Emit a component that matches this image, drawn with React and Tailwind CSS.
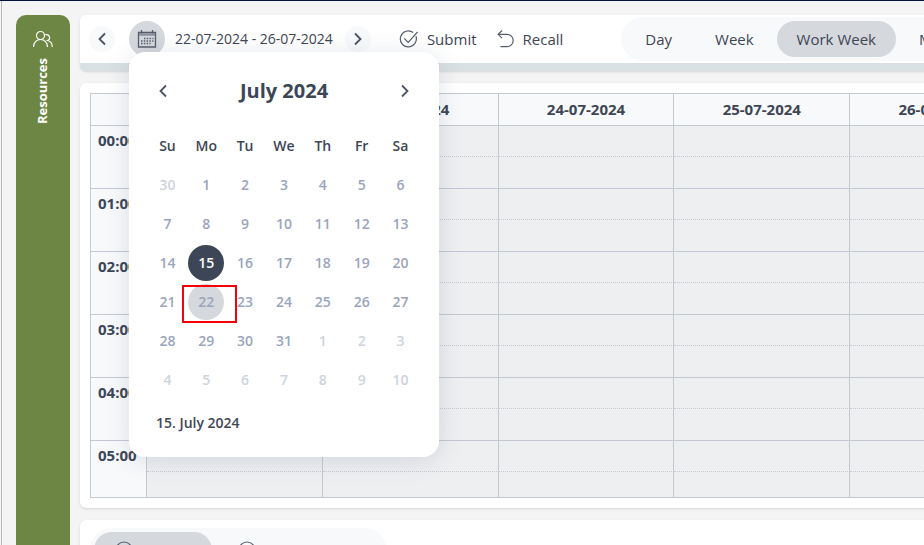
import React from "react";

const days = ["22-07-2024", "23-07-2024", "24-07-2024", "25-07-2024", "26-07-2024"];
const hours = ["00:00", "01:00", "02:00", "03:00", "04:00", "05:00"];
const views = ["Day", "Week", "Work Week", "Month"];
const weekdays = ["Su", "Mo", "Tu", "We", "Th", "Fr", "Sa"];

// June 30 is the first visible day, August 10 the last one
const calendarDays = Array.from({ length: 42 }, (_, i) => {
  const date = new Date(2024, 5, 30 + i);
  return { day: date.getDate(), inMonth: date.getMonth() === 6 };
});

const Chevron = ({ left }) => (
  <svg width="10" height="14" viewBox="0 0 10 14" fill="none" stroke="#4b5363" strokeWidth="1.8">
    <path d={left ? "M8 1.5 2.5 7 8 12.5" : "M2 1.5 7.500 7 2 12.5"} />
  </svg>
);

const CalendarIcon = () => (
  <svg width="20" height="20" viewBox="0 0 20 20" fill="none" stroke="#565e6d">
    <path d="M1.500 3.500h17v14.500h-17z" strokeWidth="1.300" />
    <path d="M2 5.500h16" stroke="#8b919d" strokeWidth="2.500" />
    <path d="M4.500 1v3.500M15.500 1v3.500" strokeWidth="1.300" />
    <path d="M7 9.500h9.500M4 12h12.500M4 14.500h9.500" strokeWidth="1.500" strokeDasharray="1.500 1.300" />
  </svg>
);

const SubmitIcon = () => (
  <svg width="20" height="20" viewBox="0 0 20 20" fill="none" stroke="#565e6d" strokeWidth="1.200">
    <path d="M16.900 7.200A8 8 0 1 1 14.200 3.500" />
    <path d="M5.200 9.300 9.200 13.300 18.500 3" />
  </svg>
);

const RecallIcon = () => (
  <svg width="18" height="20" viewBox="0 0 18 20" fill="none" stroke="#565e6d" strokeWidth="1.200">
    <path d="M5 1.500 1.200 5.300 5 9.100" />
    <path d="M1.200 5.300H10a6.200 6.200 0 0 1 0 12.400H3.500" />
  </svg>
);

const PeopleIcon = () => (
  <svg width="22" height="18" viewBox="0 0 22 18" fill="none" stroke="#fff" strokeWidth="1.200">
    <circle cx="8.500" cy="5.500" r="4" />
    <path d="M1.500 17c0-4.500 3-7.500 7-7.500s7 3 7 7.500" />
    <path d="M13.200 4.800c4-1.300 6.300 3.700 2.300 5.700 3.200.7 4.800 3.200 4.800 6.500" />
  </svg>
);

const TabIcon = () => (
  <svg width="18" height="18" viewBox="0 0 18 18" fill="none" stroke="#565e6d" strokeWidth="1.200">
    <circle cx="9" cy="9" r="8" />
    <path d="M9 4v5h4" />
  </svg>
);

const DatePicker = () => (
  <div className="absolute left-0 top-[31px] z-10 w-[310px] rounded-2xl bg-white px-[19px] pb-6 pt-5 shadow-[0_3px_24px_rgba(60,80,110,0.16)]">
    <div className="flex items-center justify-between px-2.5">
      <button type="button" aria-label="Previous month" className="py-3">
        <Chevron left />
      </button>
      <h2 className="text-xl leading-7 font-bold">July 2024</h2>
      <button type="button" aria-label="Next month" className="py-3">
        <Chevron />
      </button>
    </div>
    <table className="mt-4 w-full table-fixed text-center text-sm">
      <thead>
        <tr className="h-[39px]">
          {weekdays.map((name) => (
            <th key={name} className="p-0 font-semibold">
              {name}
            </th>
          ))}
        </tr>
      </thead>
      <tbody>
        {[0, 1, 2, 3, 4, 5].map((week) => (
          <tr key={week}>
            {calendarDays.slice(week * 7, week * 7 + 7).map(({ day, inMonth }) => {
              let style = inMonth ? "text-[#9aa5bd]" : "text-[#ced3df]";
              if (inMonth && day === 15) style = "bg-[#3d4656] text-white";
              if (inMonth && day === 22) style = "bg-[#d5d8dd] text-[#9aa5bd]";
              return (
                <td key={day} className="relative h-[39px] p-0">
                  <button type="button" className={`size-9 rounded-full font-semibold ${style}`}>
                    {day}
                  </button>
                  {inMonth && day === 22 && (
                    <span className="pointer-events-none absolute -left-[5px] top-[3px] h-[38px] w-[55px] border-2 border-[#f80008]" />
                  )}
                </td>
              );
            })}
          </tr>
        ))}
      </tbody>
    </table>
    <p className="mt-3.5 px-2 text-sm font-semibold">15. July 2024</p>
  </div>
);

const Toolbar = () => (
  <div className="relative z-10 rounded-md border-b-8 border-[#d9e0e3] bg-white shadow-sm">
    <div className="flex h-12 items-center whitespace-nowrap pl-[9px]">
      <button
        type="button"
        aria-label="Previous week"
        className="flex size-[26px] shrink-0 items-center justify-center rounded-full bg-[#f8f9fb]"
      >
        <Chevron left />
      </button>
      <div className="relative ml-3.5 shrink-0">
        <button
          type="button"
          aria-label="Pick a date"
          className="flex size-9 items-center justify-center rounded-full bg-[#d5d8dd]"
        >
          <CalendarIcon />
        </button>
        <DatePicker />
      </div>
      <span className="ml-2.5 text-sm">22-07-2024 - 26-07-2024</span>
      <button
        type="button"
        aria-label="Next week"
        className="ml-3 flex size-[26px] shrink-0 items-center justify-center rounded-full bg-[#f8f9fb]"
      >
        <Chevron />
      </button>
      <button type="button" className="ml-7 flex items-center gap-2 text-[15px]">
        <SubmitIcon />
        Submit
      </button>
      <button type="button" className="ml-5 flex items-center gap-2 text-[15px]">
        <RecallIcon />
        Recall
      </button>
      <div className="ml-[58px] flex h-11 shrink-0 items-center gap-[3px] rounded-full bg-[#f8f9fb] px-1">
        {views.map((view) => (
          <button
            key={view}
            type="button"
            className={`h-9 rounded-full px-5 text-[15px] ${view === "Work Week" ? "bg-[#d5d8dd]" : ""}`}
          >
            {view}
          </button>
        ))}
      </div>
    </div>
  </div>
);

const Schedule = () => (
  <div className="mt-3 overflow-hidden rounded-md bg-white p-2.5 shadow">
    <table className="w-full min-w-[936px] table-fixed border-separate border-spacing-0 border-l border-t border-[#c4c8d1] text-[15px]">
      <thead>
        <tr className="h-8 bg-[#f8f9fb]">
          <th className="w-14 border-b border-r border-[#c4c8d1] p-0" />
          {days.map((day) => (
            <th key={day} className="border-b border-r border-[#c4c8d1] p-0 font-bold">
              {day}
            </th>
          ))}
        </tr>
      </thead>
      <tbody>
        {hours.map((hour, i) => (
          <React.Fragment key={hour}>
            <tr className="h-[31px]">
              <th
                rowSpan={2}
                className="border-b border-r border-[#c4c8d1] bg-[#f8f9fb] p-0 pl-[7px] pt-[3px] text-left align-top font-bold"
              >
                {hour}
              </th>
              {days.map((day) => (
                <td
                  key={day}
                  className="border-b border-r border-[#c4c8d1] bg-[#eeeff1] p-0 [border-bottom-style:dotted]"
                />
              ))}
            </tr>
            <tr className={i === hours.length - 1 ? "h-[26px]" : "h-8"}>
              {days.map((day) => (
                <td key={day} className="border-b border-r border-[#c4c8d1] bg-[#eeeff1] p-0" />
              ))}
            </tr>
          </React.Fragment>
        ))}
      </tbody>
    </table>
  </div>
);

const App = () => {
  return (
    <div className="h-screen overflow-hidden border-t border-[#04103a] bg-[#f4f4f4] pl-px font-['Open_Sans','Noto_Sans',sans-serif] text-[#3d4656]">
      <div className="-mr-3 flex min-h-full gap-2.5 border-l border-[#b9bbc0] pl-3.5 pt-3.5">
        <aside className="flex w-[54px] shrink-0 flex-col items-center rounded-t-[10px] bg-[#6e8644] pt-[15px] text-white">
          <PeopleIcon />
          <span className="mt-2.5 rotate-180 text-[13px] font-bold [writing-mode:vertical-rl]">Resources</span>
        </aside>
        <main className="min-w-0 flex-1">
          <Toolbar />
          <Schedule />
          <div className="mt-3 rounded-md bg-white px-2.5 py-2 shadow">
            <div className="inline-flex h-11 w-[297px] items-center rounded-full bg-[#f8f9fb] px-1">
              <button
                type="button"
                aria-label="First tab"
                className="h-9 w-[118px] rounded-full bg-[#d5d8dd] pl-[21px]"
              >
                <TabIcon />
              </button>
              <button type="button" aria-label="Second tab" className="h-9 w-[118px] rounded-full pl-[26px]">
                <TabIcon />
              </button>
            </div>
          </div>
        </main>
      </div>
    </div>
  );
};

export default App;
